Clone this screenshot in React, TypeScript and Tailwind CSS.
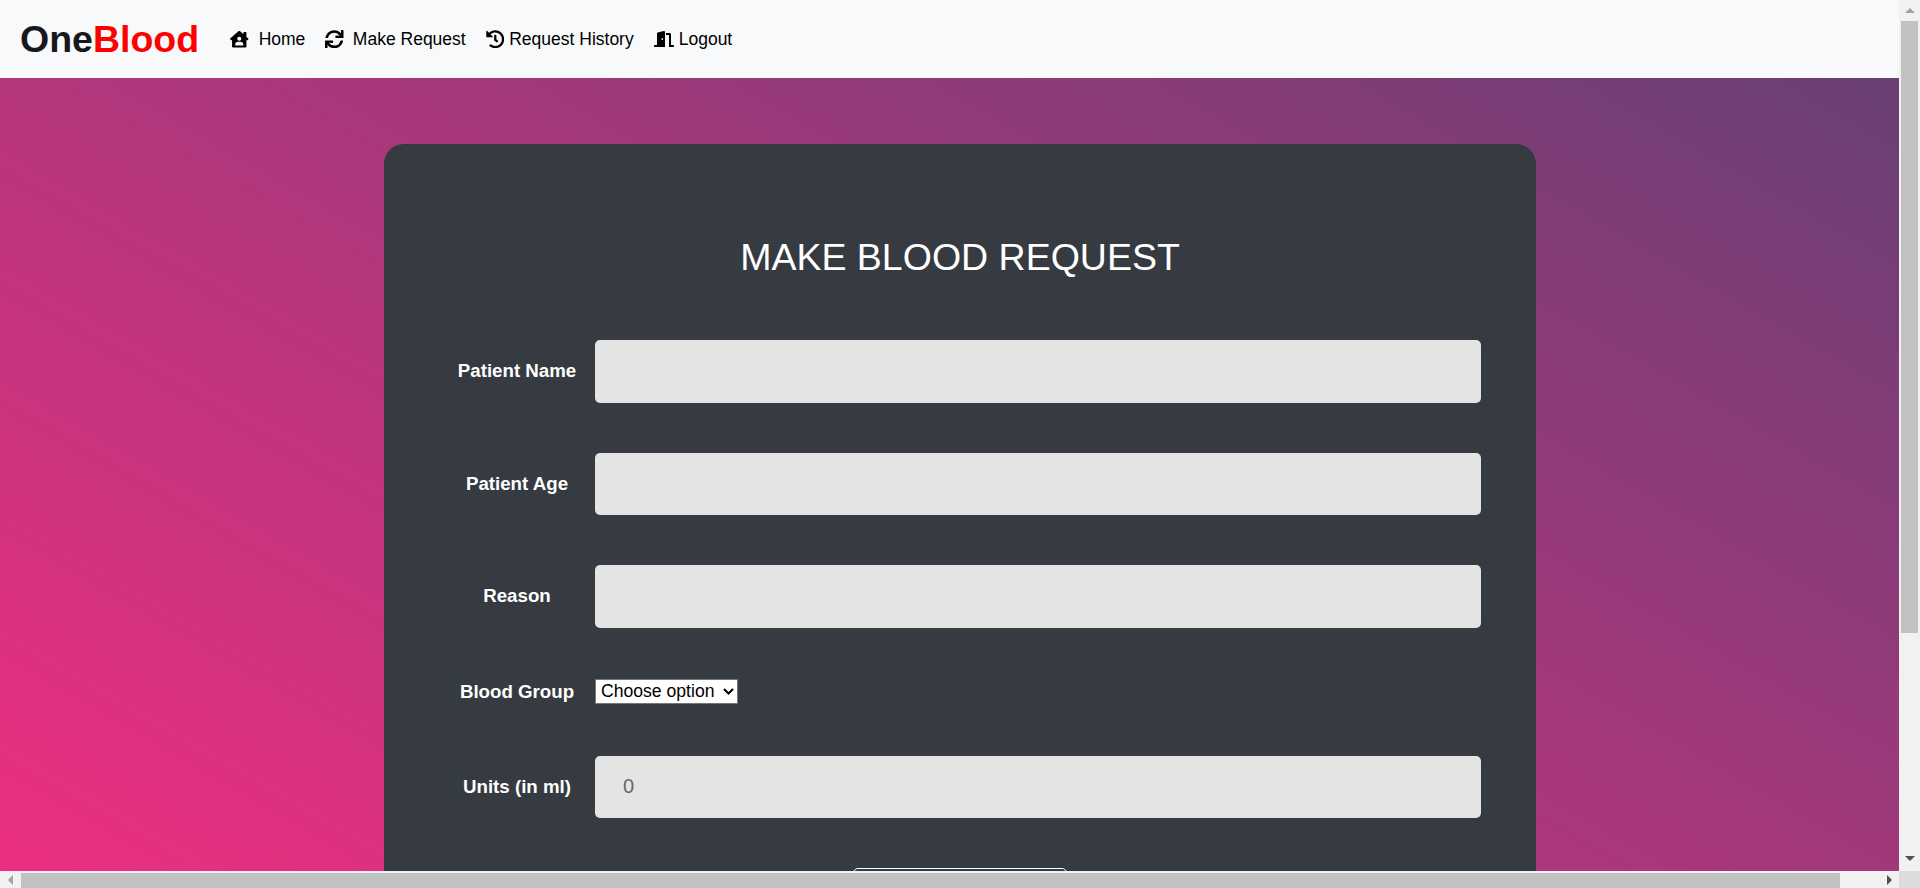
import { FaDoorOpen, FaHistory, FaHouseUser, FaSync } from 'react-icons/fa';

const navLinks = [
  { label: 'Home', icon: <FaHouseUser size={18.5} />, className: 'ml-[31px] gap-[10px]' },
  { label: 'Make Request', icon: <FaSync size={18.5} />, className: 'ml-[20px] gap-[9px]' },
  { label: 'Request History', icon: <FaHistory size={18.5} />, className: 'ml-[20px] gap-[5px]' },
  { label: 'Logout', icon: <FaDoorOpen size={20} />, className: 'ml-[20px] gap-[5px]' },
];

function Field({ label, value }: { label: string; value?: string }) {
  return (
    <div className="mb-[50px] flex items-center">
      <label className="w-[156px] shrink-0 text-center text-[18.7px] font-bold text-white">{label}</label>
      <input
        readOnly
        value={value ?? ''}
        className="h-[62.5px] w-[886px] rounded-[5px] bg-[#e4e4e4] pl-[28px] text-[20px] text-[#666]"
      />
    </div>
  );
}

export default function App() {
  return (
    <div className="flex h-screen w-screen overflow-hidden font-['Liberation_Sans',Arial,sans-serif]">
      <div className="flex min-w-0 flex-1 flex-col">
        <div className="min-h-0 flex-1 overflow-hidden">
          <nav className="flex h-[78px] items-center bg-[#f8f9fa] pl-[20px]">
            <a className="text-[37.5px] font-bold text-[#16181b]">
              One<span className="text-[#ff0000]">Blood</span>
            </a>
            {navLinks.map(link => (
              <a key={link.label} className={`flex items-center text-[17.5px] text-black ${link.className}`}>
                {link.icon}
                {link.label}
              </a>
            ))}
          </nav>

          <main className="h-[793px] bg-[linear-gradient(30deg,#ec2f80,#693f75)] pt-[66px]">
            <div className="ml-[384px] w-[1152px] rounded-t-[20px] bg-[#363a41] px-[55px] pt-[91px]">
              <h1 className="mb-[61px] text-center text-[37.5px] leading-[44px] font-normal text-white">
                MAKE BLOOD REQUEST
              </h1>
              <Field label="Patient Name" />
              <Field label="Patient Age" />
              <Field label="Reason" />
              <div className="mb-[50px] flex h-[28px] items-center">
                <label className="mt-[2px] w-[156px] shrink-0 text-center text-[18.7px] font-bold text-white">
                  Blood Group
                </label>
                <div className="relative">
                  <select className="block h-[25px] w-[143px] appearance-none border border-[#767676] bg-white pl-[5px] text-[17.6px] leading-[21px] text-black">
                    <option>Choose option</option>
                  </select>
                  <svg
                    className="pointer-events-none absolute top-[9px] right-[4px]"
                    width="11"
                    height="7"
                    viewBox="0 0 11 7"
                  >
                    <path d="M1 1l4.5 4.5L10 1" fill="none" stroke="#000" strokeWidth="2" />
                  </svg>
                </div>
              </div>
              <Field label="Units (in ml)" value="0" />
              <button className="mx-auto block h-[50px] w-[214px] rounded-[5px] border border-white"></button>
            </div>
          </main>
        </div>

        {/* horizontal scrollbar */}
        <div className="flex h-[17px] items-center bg-[#f1f1f1]">
          <div className="flex w-[21px] shrink-0 justify-center">
            <svg width="6" height="10" viewBox="0 0 6 10"><path d="M5 0v10L0 5z" fill="#a3a3a3" /></svg>
          </div>
          <div className="mt-[2px] h-[15px] w-[1819px] bg-[#c1c1c1]"></div>
          <div className="flex flex-1 justify-end pr-[6px]">
            <svg width="6" height="10" viewBox="0 0 6 10"><path d="M0 0v10l5-5z" fill="#505050" /></svg>
          </div>
        </div>
      </div>

      {/* vertical scrollbar */}
      <div className="flex w-[21px] shrink-0 flex-col bg-[#f1f1f1]">
        <div className="flex h-[21px] items-center justify-center">
          <svg width="10" height="6" viewBox="0 0 10 6"><path d="M0 5h10L5 0z" fill="#a3a3a3" /></svg>
        </div>
        <div className="mx-auto h-[612px] w-[17px] bg-[#c1c1c1]"></div>
        <div className="flex flex-1 items-end justify-center pb-[9px]">
          <svg width="10" height="6" viewBox="0 0 10 6"><path d="M0 0h10L5 5z" fill="#505050" /></svg>
        </div>
        <div className="h-[17px] bg-[#dcdcdc]"></div>
      </div>
    </div>
  );
}
